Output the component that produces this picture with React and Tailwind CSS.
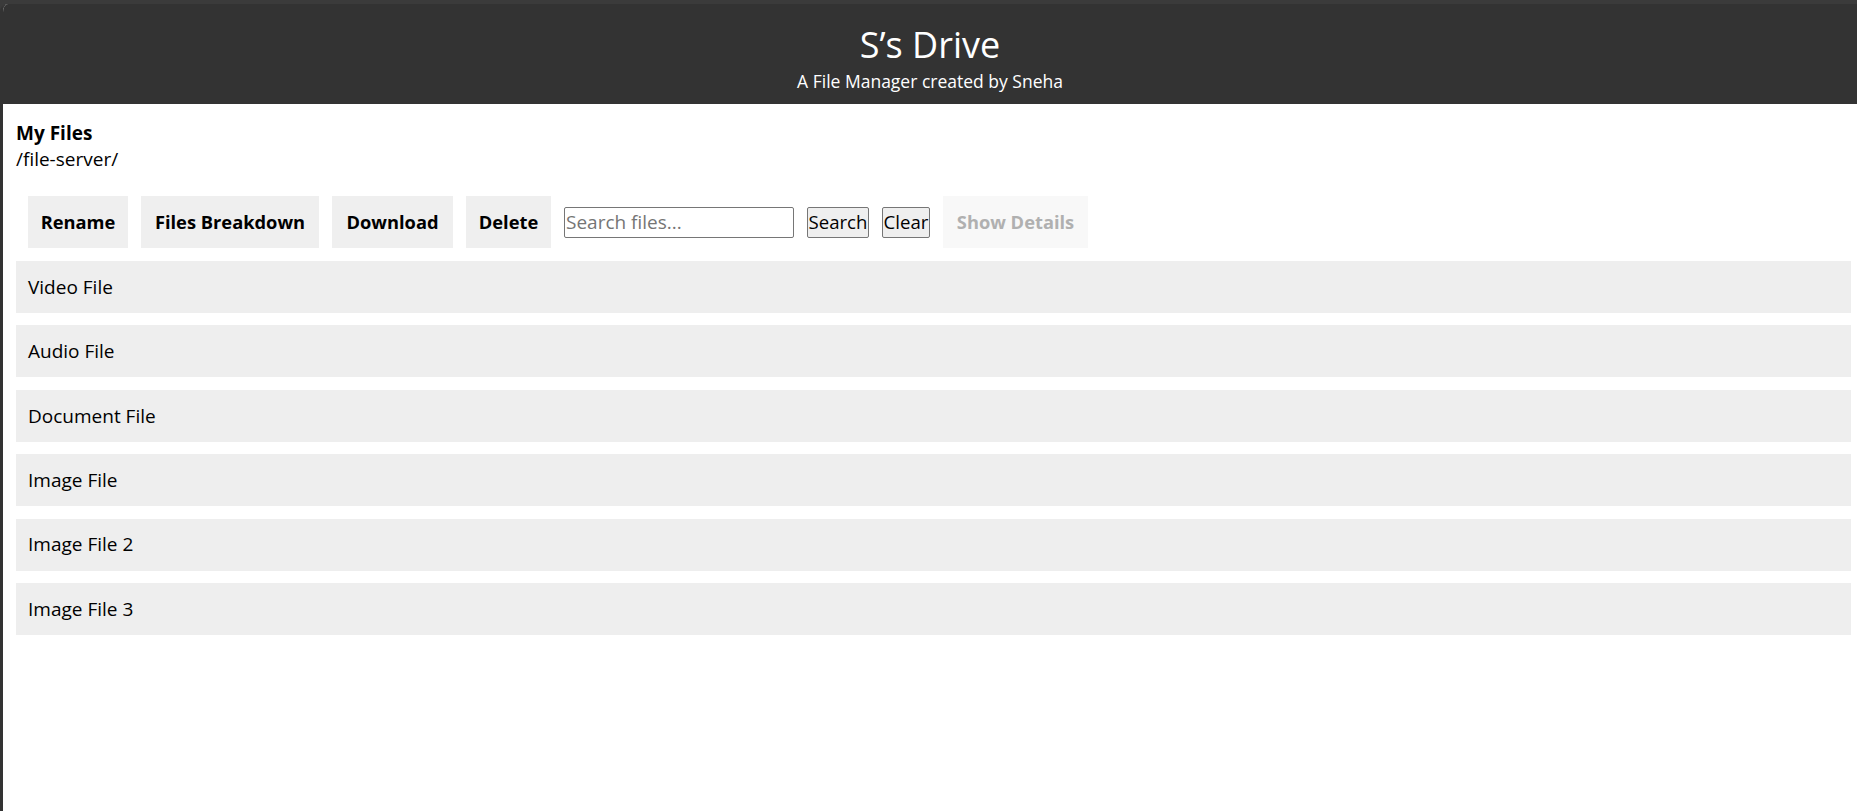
const files = ['Video File', 'Audio File', 'Document File', 'Image File', 'Image File 2', 'Image File 3']

const actions = [
  { label: 'Rename', w: 'w-[100px]' },
  { label: 'Files Breakdown', w: 'w-[178px]' },
  { label: 'Download', w: 'w-[121px]' },
  { label: 'Delete', w: 'w-[85px]' },
]

export default function App() {
  return (
    <div className="min-h-screen bg-[#3b3b3b] pt-[4px] font-['Open_Sans',sans-serif] text-black">
      <div className="min-h-[807px] bg-white border-l-[3px] border-[#333] rounded-tl-[8px] overflow-hidden">
        <header className="bg-[#333] text-white text-center h-[100px] pt-[21px]">
          <h1 className="text-[36px] leading-[40px]">S’s Drive</h1>
          <p className="text-[17.5px] leading-[22px] mt-[5px]">A File Manager created by Sneha</p>
        </header>

        <main className="pl-[13px] pr-[6px] pt-[15.5px]">
          <h3 className="text-[19px] leading-[26px] font-bold">My Files</h3>
          <p className="text-[19px] leading-[26px]">/file-server/</p>

          <div className="flex items-center gap-[13px] pl-[12px] mt-[24.5px]">
            {actions.map((a) => (
              <button key={a.label} className={`${a.w} h-[52px] bg-[#efefef] text-[18.3px] font-bold`}>
                {a.label}
              </button>
            ))}
            <input
              type="text"
              placeholder="Search files..."
              className="w-[230px] h-[31px] border border-[#767676] rounded-[2px] px-[1px] text-[19px] placeholder:text-[#757575] outline-none"
            />
            <button className="w-[62px] h-[31px] border border-[#767676] rounded-[2px] bg-[#efefef] text-[18.6px]">
              Search
            </button>
            <button className="w-[48px] h-[31px] border border-[#767676] rounded-[2px] bg-[#efefef] text-[18.6px]">
              Clear
            </button>
            <button disabled className="w-[145px] h-[52px] bg-[#f8f8f8] text-[18.3px] font-bold text-[#b0b0b0]">
              Show Details
            </button>
          </div>

          <ul className="flex flex-col gap-[12.4px] mt-[13px]">
            {files.map((f) => (
              <li key={f} className="h-[52px] flex items-center pl-[12px] bg-[#eeeeee] text-[19px]">
                {f}
              </li>
            ))}
          </ul>
        </main>
      </div>
    </div>
  )
}
